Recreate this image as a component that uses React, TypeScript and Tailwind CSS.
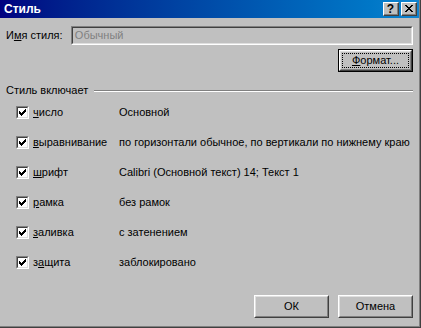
import React from 'react';

const Check = () => (
    <div className="w-[13px] h-[13px] border-t border-l border-t-[#808080] border-l-[#808080] border-b border-r border-b-white border-r-white">
        <div className="w-[11px] h-[11px] border-t border-l border-t-[#404040] border-l-[#404040] border-b border-r border-b-[#dfdfdf] border-r-[#dfdfdf] bg-white flex items-center justify-center">
            <svg width="7" height="7" viewBox="0 0 7 7" shapeRendering="crispEdges">
                <rect x="6" y="0" width="1" height="1" fill="#000" />
                <rect x="5" y="1" width="2" height="1" fill="#000" />
                <rect x="0" y="2" width="1" height="1" fill="#000" />
                <rect x="4" y="2" width="3" height="1" fill="#000" />
                <rect x="0" y="3" width="2" height="1" fill="#000" />
                <rect x="3" y="3" width="3" height="1" fill="#000" />
                <rect x="0" y="4" width="5" height="1" fill="#000" />
                <rect x="1" y="5" width="3" height="1" fill="#000" />
                <rect x="2" y="6" width="1" height="1" fill="#000" />
            </svg>
        </div>
    </div>
);

// raised 3d button, optionally default (black frame + focus rect)
const Btn = ({ children, def = false }: { children: React.ReactNode; def?: boolean }) => {
    if (!def)
        return (
            <div className="w-[75px] h-[23px] border-t border-l border-t-white border-l-white border-b border-r border-b-[#404040] border-r-[#404040]">
                <div className="w-full h-full border-t border-l border-t-[#dfdfdf] border-l-[#dfdfdf] border-b border-r border-b-[#808080] border-r-[#808080] flex items-center justify-center">
                    {children}
                </div>
            </div>
        );
    return (
        <div className="w-[75px] h-[23px] border border-black">
            <div className="w-full h-full border-t border-l border-t-white border-l-white border-b border-r border-b-[#404040] border-r-[#404040]">
                <div className="w-full h-full border-t border-l border-t-[#dfdfdf] border-l-[#dfdfdf] border-b border-r border-b-[#808080] border-r-[#808080] p-[1px]">
                    <div className="w-full h-full border border-dotted border-black flex items-center justify-center">
                        {children}
                    </div>
                </div>
            </div>
        </div>
    );
};

const TitleBtn = ({ children }: { children: React.ReactNode }) => (
    <div className="w-[16px] h-[14px] bg-[#c0c0c0] border-t border-l border-t-white border-l-white border-b border-r border-b-[#404040] border-r-[#404040]">
        <div className="w-full h-full border-b border-r border-b-[#808080] border-r-[#808080] flex items-center justify-center text-black font-bold text-[12px] leading-none">
            {children}
        </div>
    </div>
);

const CloseGlyph = () => (
    <svg width="8" height="7" viewBox="0 0 8 7" shapeRendering="crispEdges">
        <rect x="0" y="0" width="2" height="1" fill="#000" />
        <rect x="6" y="0" width="2" height="1" fill="#000" />
        <rect x="1" y="1" width="2" height="1" fill="#000" />
        <rect x="5" y="1" width="2" height="1" fill="#000" />
        <rect x="2" y="2" width="4" height="1" fill="#000" />
        <rect x="3" y="3" width="2" height="1" fill="#000" />
        <rect x="2" y="4" width="4" height="1" fill="#000" />
        <rect x="1" y="5" width="2" height="1" fill="#000" />
        <rect x="5" y="5" width="2" height="1" fill="#000" />
        <rect x="0" y="6" width="2" height="1" fill="#000" />
        <rect x="6" y="6" width="2" height="1" fill="#000" />
    </svg>
);

const rows: { pre: string; u: string; post: string; value: string }[] = [
    { pre: '', u: 'ч', post: 'исло', value: 'Основной' },
    { pre: '', u: 'в', post: 'ыравнивание', value: 'по горизонтали обычное, по вертикали по нижнему краю' },
    { pre: '', u: 'ш', post: 'рифт', value: 'Calibri (Основной текст) 14; Текст 1' },
    { pre: '', u: 'р', post: 'амка', value: 'без рамок' },
    { pre: '', u: 'з', post: 'аливка', value: 'с затенением' },
    { pre: 'з', u: 'а', post: 'щита', value: 'заблокировано' },
];

export default function App() {
    return (
        <div
            className="w-[421px] h-[328px] bg-[#c0c0c0] border-r border-b border-r-[#404040] border-b-[#404040] text-[11px] leading-[13px] text-black"
            style={{ fontFamily: '"Liberation Sans", Arial, sans-serif' }}
        >
            <div className="w-full h-full border-r border-b border-r-[#808080] border-b-[#808080] flex flex-col">
                {/* title bar */}
                <div className="h-[18px] bg-gradient-to-r from-[#000080] to-[#1084d0] flex items-center pl-[4px] pr-[2px]">
                    <span className="text-white font-bold text-[12px] flex-1">Стиль</span>
                    <div className="flex gap-[2px]">
                        <TitleBtn>?</TitleBtn>
                        <TitleBtn><CloseGlyph /></TitleBtn>
                    </div>
                </div>

                <div className="pl-[6px] pr-[6px]">
                    <div className="flex items-center mt-[8px]">
                        <span className="w-[65px]">И<u>м</u>я стиля:</span>
                        <div className="w-[343px] h-[19px] border-t border-l border-t-[#808080] border-l-[#808080] border-b border-r border-b-white border-r-white">
                            <div className="w-full h-full border-t border-l border-t-[#404040] border-l-[#404040] border-b border-r border-b-[#dfdfdf] border-r-[#dfdfdf] flex items-center pl-[2px] text-[#808080]">
                                Обычный
                            </div>
                        </div>
                    </div>
                    <div className="flex justify-end mt-[4px]">
                        <Btn def><span><u>Ф</u>ормат...</span></Btn>
                    </div>

                    <div className="flex items-center h-[13px] mt-[12px]">
                        <span>Стиль включает</span>
                        <div className="flex-1 ml-[6px] border-t border-t-[#808080] border-b border-b-white" />
                    </div>

                    <div className="flex flex-col mt-[9px] gap-[17px] pl-[10px]">
                        {rows.map((r, i) => (
                            <div key={i} className="flex items-center h-[13px]">
                                <Check />
                                <span className="w-[90px] pl-[4px]">{r.pre}<u>{r.u}</u>{r.post}</span>
                                <span className="whitespace-nowrap">{r.value}</span>
                            </div>
                        ))}
                    </div>

                    <div className="flex justify-end gap-[9px] mt-[26px]">
                        <Btn>ОК</Btn>
                        <Btn>Отмена</Btn>
                    </div>
                </div>
            </div>
        </div>
    );
}
